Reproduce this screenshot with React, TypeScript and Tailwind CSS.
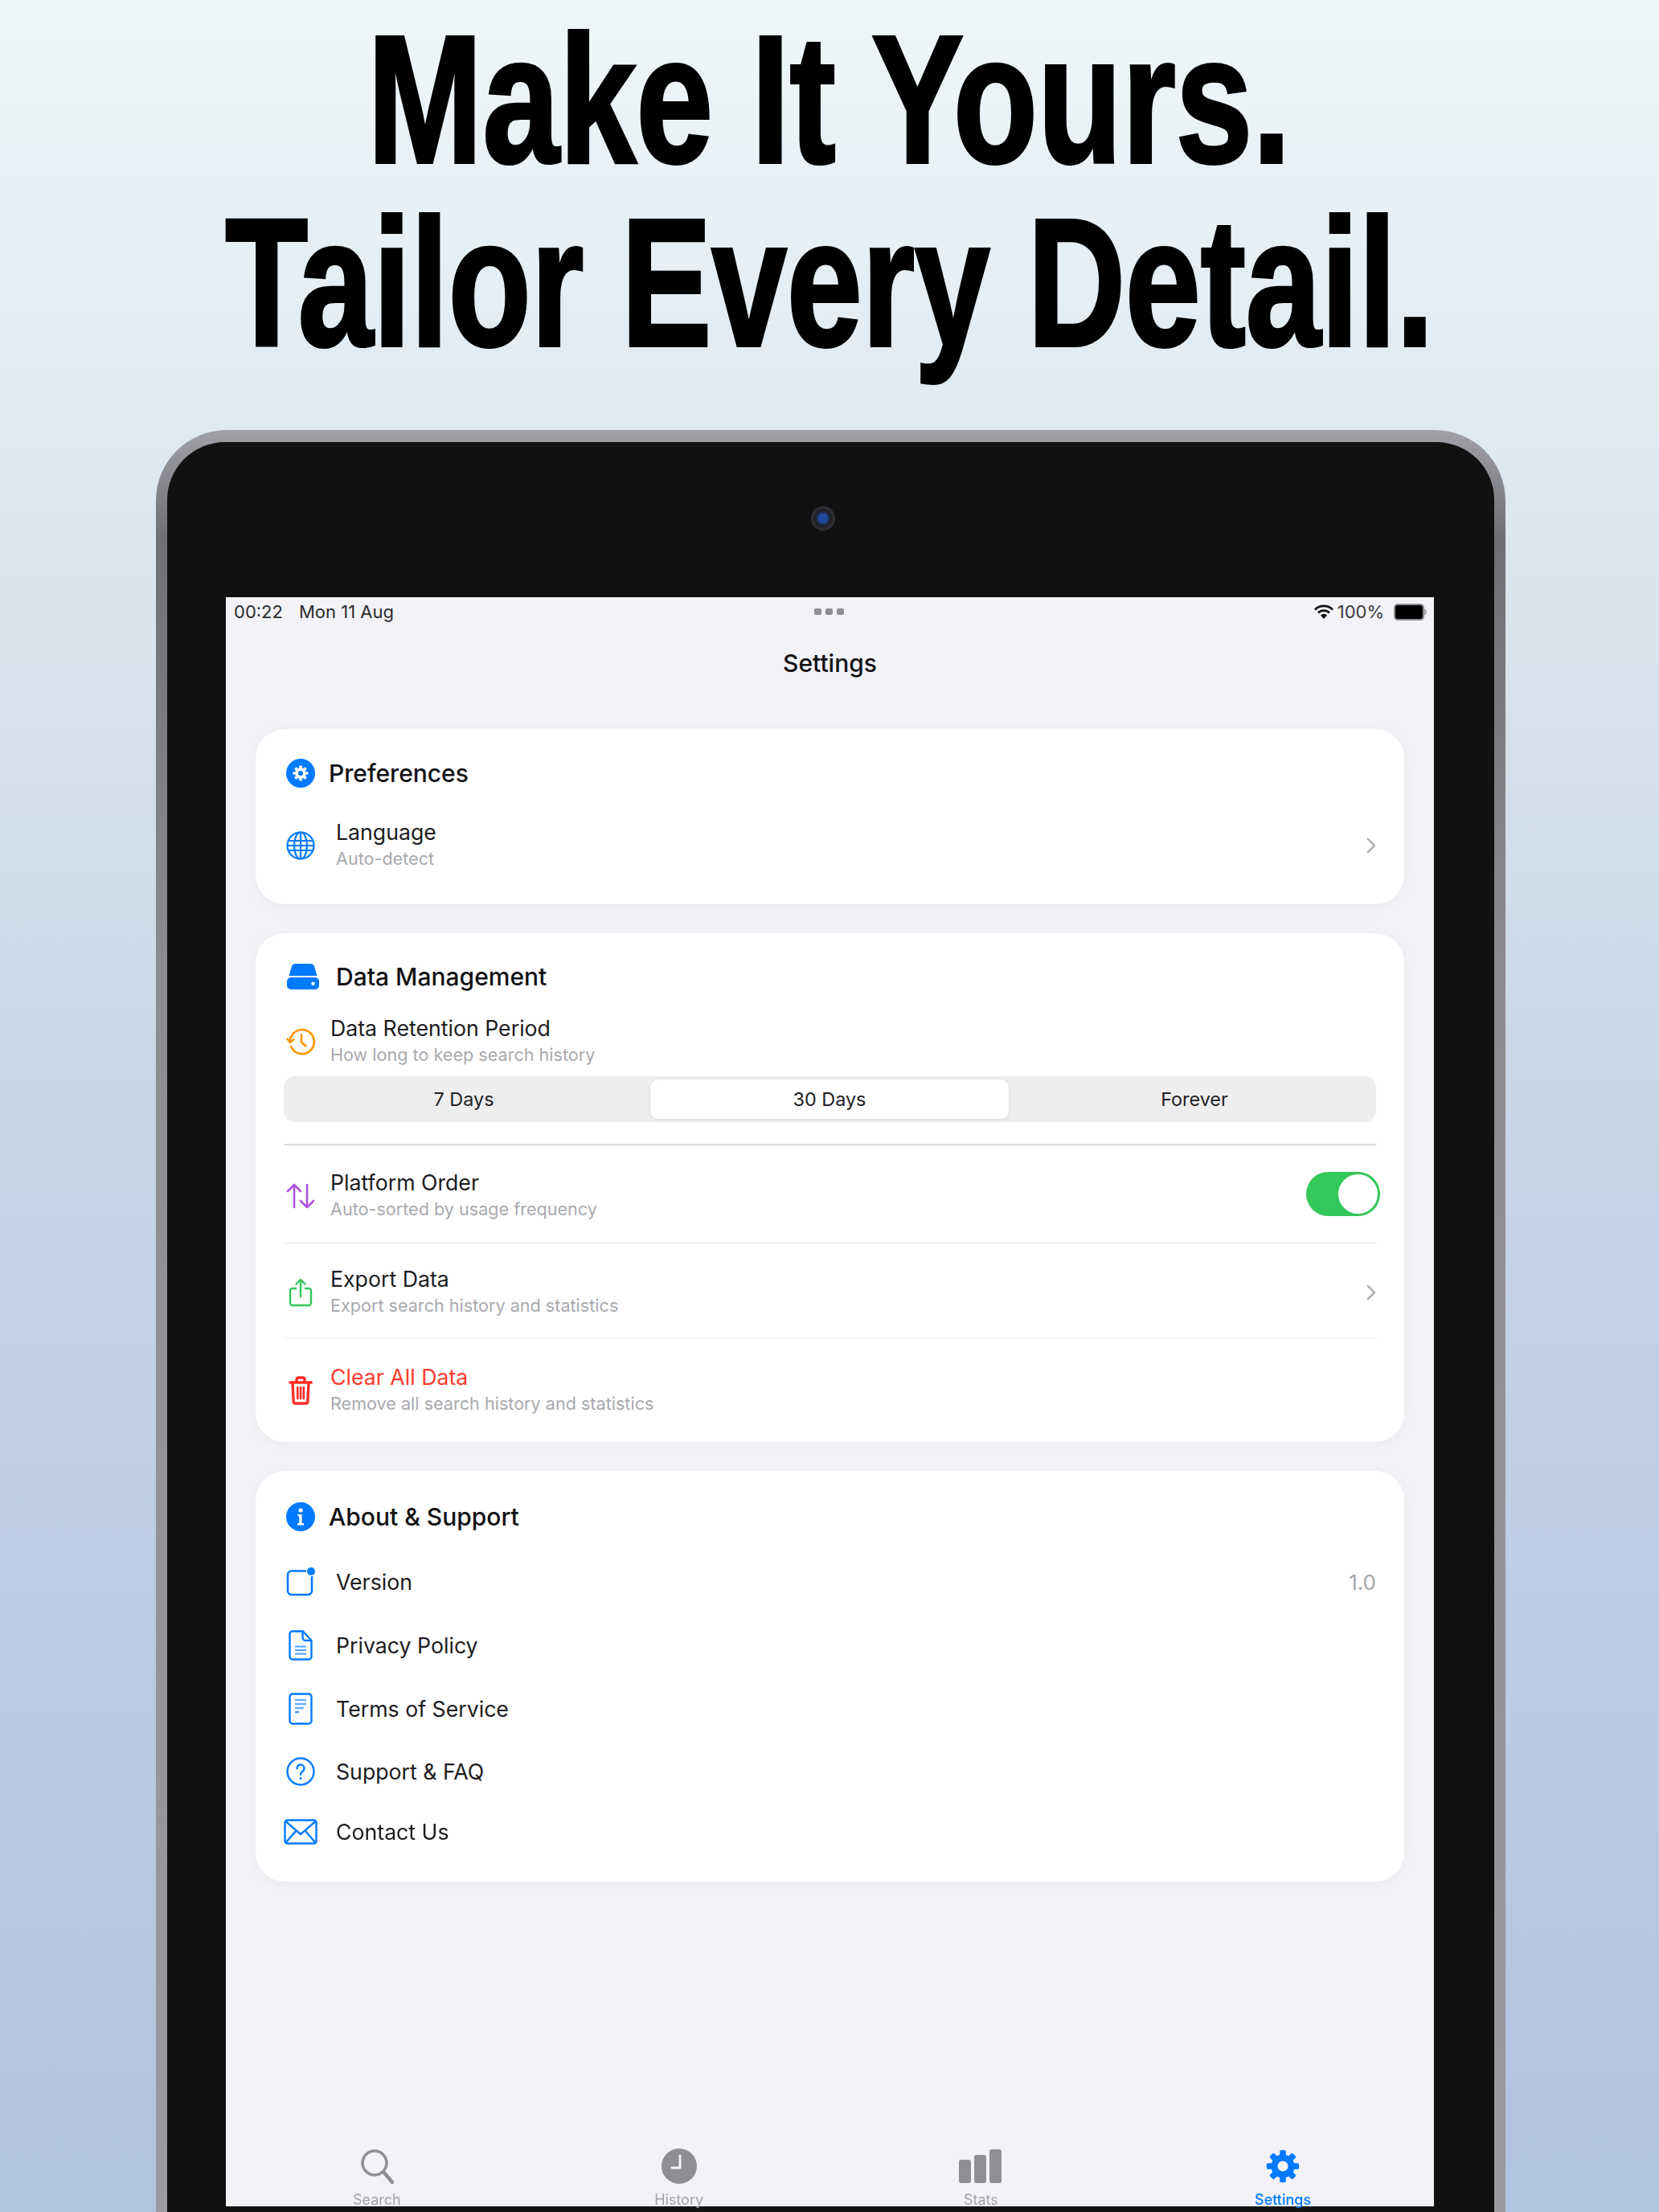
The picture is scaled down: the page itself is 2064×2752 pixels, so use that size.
import type { ReactNode } from "react";

const teeth = [0, 45, 90, 135, 180, 225, 270, 315];

function Gear({ color, hole }: { color: string; hole: string }) {
  return (
    <>
      {teeth.map((deg) => (
        <rect key={deg} x="10" y="1.5" width="4" height="5" rx="1" fill={color} transform={`rotate(${deg} 12 12)`} />
      ))}
      <circle cx="12" cy="12" r="7.6" fill={color} />
      <circle cx="12" cy="12" r="3.4" fill={hole} />
    </>
  );
}

function GearBadge() {
  return (
    <svg viewBox="0 0 36 36" className="w-[36px] h-[36px]">
      <circle cx="18" cy="18" r="18" fill="#007aff" />
      <g transform="translate(7.2 7.2) scale(0.9)">
        <Gear color="#fff" hole="#007aff" />
      </g>
    </svg>
  );
}

function GlobeIcon() {
  return (
    <svg viewBox="0 0 36 36" fill="none" stroke="#007aff" strokeWidth="2.2" className="w-[36px] h-[36px]">
      <circle cx="18" cy="18" r="16.5" />
      <ellipse cx="18" cy="18" rx="8" ry="16.5" />
      <path d="M18 1.5v33M2 12h32M2 24h32M1.5 18h33" />
    </svg>
  );
}

function DriveIcon() {
  return (
    <svg viewBox="0 0 40 32" className="w-[40px] h-[32px] translate-x-[3px]">
      <path d="M11 0h18c2.500 0 4.200 1 5 3.200L37.500 15h-35L6 3.200C6.800 1 8.500 0 11 0z" fill="#007aff" />
      <rect x="0" y="17" width="40" height="15" rx="5" fill="#007aff" />
      <circle cx="32.5" cy="24.8" r="2.2" fill="#fff" />
    </svg>
  );
}

function HistoryIcon() {
  return (
    <svg viewBox="0 0 36 34" fill="none" stroke="#ff9500" strokeWidth="2.6" strokeLinecap="round" strokeLinejoin="round" className="w-[36px] h-[34px]">
      <path d="M5 14.5A15 15 0 1 1 6 23" />
      <path d="M1.5 13.5L5 18l4.2-3.6" />
      <path d="M19 8v9.5l5.500 5" />
    </svg>
  );
}

function SortIcon() {
  return (
    <svg viewBox="0 0 36 32" fill="none" stroke="#af52de" strokeWidth="2.6" strokeLinecap="round" strokeLinejoin="round" className="w-[36px] h-[32px]">
      <path d="M10 30V2M2 10l8-8 8 8" />
      <path d="M26 2v28M18 22l8 8 8-8" />
    </svg>
  );
}

function ShareIcon() {
  return (
    <svg viewBox="0 0 30 36" fill="none" stroke="#34c759" strokeWidth="2.4" strokeLinecap="round" strokeLinejoin="round" className="w-[30px] h-[36px]">
      <path d="M9 13H5a3 3 0 0 0-3 3v15a3 3 0 0 0 3 3h20a3 3 0 0 0 3-3V16a3 3 0 0 0-3-3h-4" />
      <path d="M15 23V2M9.5 7.5L15 2l5.500 5.500" />
    </svg>
  );
}

function TrashIcon() {
  return (
    <svg viewBox="0 0 30 36" fill="none" stroke="#ff2d26" strokeWidth="3.4" strokeLinecap="round" strokeLinejoin="round" className="w-[30px] h-[36px]">
      <path d="M1.800 8h26.400M10 8V4a2 2 0 0 1 2-2h6a2 2 0 0 1 2 2v4" />
      <path d="M5 8l1.200 24a2 2 0 0 0 2 2h13.600a2 2 0 0 0 2-2L25 8" />
      <path d="M11.200 14v14M15 14v14M18.800 14v14" strokeWidth="2.6" />
    </svg>
  );
}

function InfoBadge() {
  return (
    <svg viewBox="0 0 36 36" className="w-[36px] h-[36px]">
      <circle cx="18" cy="18" r="18" fill="#007aff" />
      <circle cx="18" cy="10" r="2.6" fill="#fff" />
      <path d="M14.500 15h5v11h2.500v2.500H14V26h2.200v-8.500H14.500z" fill="#fff" />
    </svg>
  );
}

function VersionIcon() {
  return (
    <svg viewBox="0 0 36 36" fill="none" className="w-[36px] h-[36px]">
      <path d="M25 4.500H7a5 5 0 0 0-5 5V29a5 5 0 0 0 5 5h20a5 5 0 0 0 5-5V11" stroke="#007aff" strokeWidth="2.6" />
      <circle cx="31" cy="5" r="5" fill="#007aff" />
    </svg>
  );
}

function PolicyIcon() {
  return (
    <svg viewBox="0 0 30 38" fill="none" stroke="#007aff" strokeWidth="2.4" strokeLinejoin="round" className="w-[30px] h-[38px]">
      <path d="M18 1.500H5a3.500 3.500 0 0 0-3.500 3.500v28A3.500 3.500 0 0 0 5 36.500h20a3.500 3.500 0 0 0 3.500-3.500V13z" />
      <path d="M17.500 2v7.500a3.500 3.500 0 0 0 3.500 3.500h7" />
      <path d="M8 20.500h14M8 25h14M8 29.500h14" strokeWidth="2" opacity="0.7" />
    </svg>
  );
}

function TermsIcon() {
  return (
    <svg viewBox="0 0 30 40" fill="none" stroke="#007aff" strokeWidth="2.4" className="w-[30px] h-[40px]">
      <rect x="1.500" y="1.500" width="27" height="37" rx="3.500" />
      <path d="M8 9h14M8 14h14M8 19h11" strokeWidth="2.400" opacity="0.6" />
      <path d="M8 24h5" strokeWidth="2.400" opacity="0.8" />
    </svg>
  );
}

function HelpIcon() {
  return (
    <svg viewBox="0 0 36 36" fill="none" stroke="#007aff" strokeWidth="2.4" strokeLinecap="round" className="w-[36px] h-[36px]">
      <circle cx="18" cy="18" r="16.500" />
      <path d="M13.500 14a4.500 4.500 0 1 1 7 3.700c-1.600 1.100-2.500 2-2.500 4" />
      <circle cx="18" cy="26.500" r="1.500" fill="#007aff" stroke="none" />
    </svg>
  );
}

function MailIcon() {
  return (
    <svg viewBox="0 0 42 32" fill="none" stroke="#007aff" strokeWidth="2.400" strokeLinejoin="round" className="w-[42px] h-[32px]">
      <rect x="1.500" y="1.500" width="39" height="29" rx="3" />
      <path d="M2.500 3L21 19 39.500 3M2.500 29.500L15.500 14.500M39.500 29.500L26.500 14.500" />
    </svg>
  );
}

function Chevron() {
  return (
    <svg viewBox="0 0 12 20" fill="none" stroke="#b3b3b8" strokeWidth="2.6" strokeLinecap="round" strokeLinejoin="round" className="w-[12px] h-[20px]">
      <path d="M2 2l8 8-8 8" />
    </svg>
  );
}

function Toggle() {
  return (
    <div className="-mr-[5px] -mt-[5px] flex h-[55px] w-[92px] items-center justify-end rounded-full bg-[#34c759] pr-[3px]">
      <div className="h-[49px] w-[49px] rounded-full bg-white" />
    </div>
  );
}

function Header({ icon, title, textClass }: { icon: ReactNode; title: string; textClass: string }) {
  return (
    <div className="flex h-[60px] items-center">
      <div className="flex w-[42px] shrink-0 items-center justify-center">{icon}</div>
      <span className={`text-[30px] font-medium text-[#111114] ${textClass}`}>{title}</span>
    </div>
  );
}

function Row({
  icon,
  title,
  sub,
  trailing,
  className,
  textClass,
  titleClass = "text-[#1c1c1e]",
}: {
  icon: ReactNode;
  title: string;
  sub?: string;
  trailing?: ReactNode;
  className: string;
  textClass: string;
  titleClass?: string;
}) {
  return (
    <div className={`flex items-center ${sub ? "h-[70px]" : "h-[44px]"} ${className}`}>
      <div className="flex w-[42px] shrink-0 items-center justify-center">{icon}</div>
      <div className={`flex flex-col ${textClass}`}>
        <span className={`text-[26.7px] leading-[33px] ${titleClass}`}>{title}</span>
        {sub && <span className="text-[21.6px] leading-[33px] text-[#a9a9ae]">{sub}</span>}
      </div>
      <div className="ml-auto flex items-center">{trailing}</div>
    </div>
  );
}

function Card({ className, children }: { className: string; children: ReactNode }) {
  return (
    <section className={`mx-[37px] flex flex-col rounded-[36px] bg-white px-[35px] shadow-[0_2px_16px_rgba(0,0,0,0.04)] ${className}`}>
      {children}
    </section>
  );
}

function Segments() {
  return (
    <div className="mt-[8px] grid h-[57px] grid-cols-[456px_446px_1fr] items-center rounded-[14px] bg-[#eeeeee] text-[23.4px] text-[#222224]">
      <div className="pr-[8px] text-center">7 Days</div>
      <div className="flex h-[49px] items-center justify-center rounded-[10px] bg-white shadow-[0_1px_4px_rgba(0,0,0,0.1)]">30 Days</div>
      <div className="pl-[5px] text-center">Forever</div>
    </div>
  );
}

function Tab({ icon, label, active }: { icon: ReactNode; label: string; active?: boolean }) {
  return (
    <div className="flex flex-col items-center">
      <div className="flex h-[44px] items-center justify-center">{icon}</div>
      <span className={`mt-[11px] text-[18px] leading-[18px] ${active ? "font-medium text-[#007aff]" : "text-[#a3a3a8]"}`}>{label}</span>
    </div>
  );
}

function TabBar() {
  return (
    <nav className="mt-auto grid h-[75px] shrink-0 grid-cols-4 pt-[3px]">
      <Tab
        label="Search"
        icon={
          <svg viewBox="0 0 42 44" fill="none" stroke="#8e8e93" strokeLinecap="round" className="h-[44px] w-[42px]">
            <circle cx="18" cy="18" r="15" strokeWidth="3.500" />
            <path d="M29 29l11 13" strokeWidth="4.500" />
          </svg>
        }
      />
      <Tab
        label="History"
        icon={
          <svg viewBox="0 0 44 44" fill="none" className="h-[44px] w-[44px]">
            <circle cx="22" cy="22" r="22" fill="#8e8e93" />
            <path d="M23 9v15H13" stroke="#f2f2f7" strokeWidth="3" strokeLinecap="round" strokeLinejoin="round" />
          </svg>
        }
      />
      <Tab
        label="Stats"
        icon={
          <svg viewBox="0 0 54 42" fill="#8e8e93" className="h-[42px] w-[54px]">
            <rect x="0" y="13" width="15" height="29" rx="3" />
            <rect x="19" y="7" width="15" height="35" rx="3" />
            <rect x="38" y="0" width="15" height="42" rx="3" />
          </svg>
        }
      />
      <Tab
        label="Settings"
        active
        icon={
          <svg viewBox="0 0 24 24" className="h-[46px] w-[46px]">
            <Gear color="#007aff" hole="#f2f2f7" />
          </svg>
        }
      />
    </nav>
  );
}

function StatusBar() {
  return (
    <div className="relative flex h-[34px] shrink-0 items-center pl-[10px] pr-[9px] pt-[2px] text-[22px] text-[#2a2a2c]">
      <span>00:22</span>
      <span className="ml-[20px]">Mon 11 Aug</span>
      <div className="absolute left-[732px] top-[14px] flex gap-[5px]">
        <i className="h-[8px] w-[9px] rounded-[2px] bg-[#8e8e93]" />
        <i className="h-[8px] w-[9px] rounded-[2px] bg-[#8e8e93]" />
        <i className="h-[8px] w-[9px] rounded-[2px] bg-[#8e8e93]" />
      </div>
      <div className="ml-auto flex items-center">
        <svg viewBox="0 0 24 18" fill="none" stroke="#111" strokeWidth="2.600" className="h-[18px] w-[24px]">
          <path d="M1 6.500a15.500 15.500 0 0 1 22 0M5 10.500a10 10 0 0 1 14 0" />
          <path d="M12 18l-4-4.500a5.500 5.500 0 0 1 8 0z" fill="#111" stroke="none" />
        </svg>
        <span className="ml-[5px] text-[#3a3a3c]">100%</span>
        <div className="ml-[12px] flex items-center">
          <div className="h-[21px] w-[38px] rounded-[5px] border-2 border-[#8e8e93] bg-black" />
          <div className="h-[7px] w-[3px] rounded-r-[2px] bg-[#b0b0b5]" />
        </div>
      </div>
    </div>
  );
}

export default function App() {
  return (
    <div className="h-[2752px] w-[2064px] overflow-hidden bg-[linear-gradient(180deg,#eff6f8_0%,#dfeaf1_19%,#c5d3e6_55%,#b0c3df_100%)] font-['Inter',sans-serif]">
      <header className="flex h-[535px] flex-col items-center font-['Liberation_Sans',sans-serif] text-black">
        <h1 className="mt-[10px] h-[228px] scale-x-[0.76] whitespace-nowrap text-[226px] font-bold leading-[228px] [-webkit-text-stroke:4px_black]">Make It Yours.</h1>
        <h1 className="h-[228px] scale-x-[0.745] whitespace-nowrap text-[226px] font-bold leading-[228px] [-webkit-text-stroke:4px_black]">Tailor Every Detail.</h1>
      </header>

      <div className="ml-[194px] h-[2217px] w-[1679px] rounded-t-[88px] bg-[linear-gradient(180deg,#a0a0a6_0%,#6f7075_6%,#8b8c92_30%,#9a9aa0_100%)] px-[14px] pt-[15px]">
        <div className="relative h-[2202px] rounded-t-[72px] bg-[#111111] pl-[73px] pr-[75px] pt-[193px]">
          <div className="absolute left-[801px] top-[80px] h-[30px] w-[30px] rounded-full bg-[radial-gradient(circle,#1f4aa0_0%,#1f4aa0_22%,#1e1e22_45%,#3a3a3e_75%,#111111_100%)]" />
          <main className="flex h-[2002px] flex-col bg-[#f2f2f7] blur-[0.6px]">
            <StatusBar />
            <div className="flex h-[96px] shrink-0 items-center justify-center text-[30px] font-medium text-[#111114]">Settings</div>

            <Card className="mt-[34px] h-[218px]">
              <div className="mt-[25px]">
                <Header icon={<GearBadge />} title="Preferences" textClass="ml-[14px]" />
              </div>
              <Row className="mt-[25px]" textClass="ml-[23px]" icon={<GlobeIcon />} title="Language" sub="Auto-detect" trailing={<Chevron />} />
            </Card>

            <Card className="mt-[36px] h-[633px]">
              <div className="mt-[24px]">
                <Header icon={<DriveIcon />} title="Data Management" textClass="ml-[23px]" />
              </div>
              <Row className="mt-[16px]" textClass="ml-[16px]" icon={<HistoryIcon />} title="Data Retention Period" sub="How long to keep search history" />
              <Segments />
              <div className="mt-[27px] h-[2px] shrink-0 bg-[#dcdcde]" />
              <Row className="mt-[28px]" textClass="ml-[16px]" icon={<SortIcon />} title="Platform Order" sub="Auto-sorted by usage frequency" trailing={<Toggle />} />
              <div className="mt-[23px] h-px shrink-0 bg-[#e6e6e8]" />
              <Row className="mt-[26px]" textClass="ml-[16px]" icon={<ShareIcon />} title="Export Data" sub="Export search history and statistics" trailing={<Chevron />} />
              <div className="mt-[21px] h-px shrink-0 bg-[#f0f0f2]" />
              <Row className="mt-[30px]" textClass="ml-[16px]" titleClass="text-[#ff3b30]" icon={<TrashIcon />} title="Clear All Data" sub="Remove all search history and statistics" />
            </Card>

            <Card className="mt-[36px] h-[511px]">
              <div className="mt-[27px]">
                <Header icon={<InfoBadge />} title="About & Support" textClass="ml-[14px]" />
              </div>
              <Row className="mt-[29px]" textClass="ml-[23px]" icon={<VersionIcon />} title="Version" trailing={<span className="text-[26px] text-[#a3a3a8]">1.0</span>} />
              <Row className="mt-[35px]" textClass="ml-[23px]" icon={<PolicyIcon />} title="Privacy Policy" />
              <Row className="mt-[35px]" textClass="ml-[23px]" icon={<TermsIcon />} title="Terms of Service" />
              <Row className="mt-[34px]" textClass="ml-[23px]" icon={<HelpIcon />} title="Support & FAQ" />
              <Row className="mt-[31px]" textClass="ml-[23px]" icon={<MailIcon />} title="Contact Us" />
            </Card>

            <TabBar />
          </main>
        </div>
      </div>
    </div>
  );
}
